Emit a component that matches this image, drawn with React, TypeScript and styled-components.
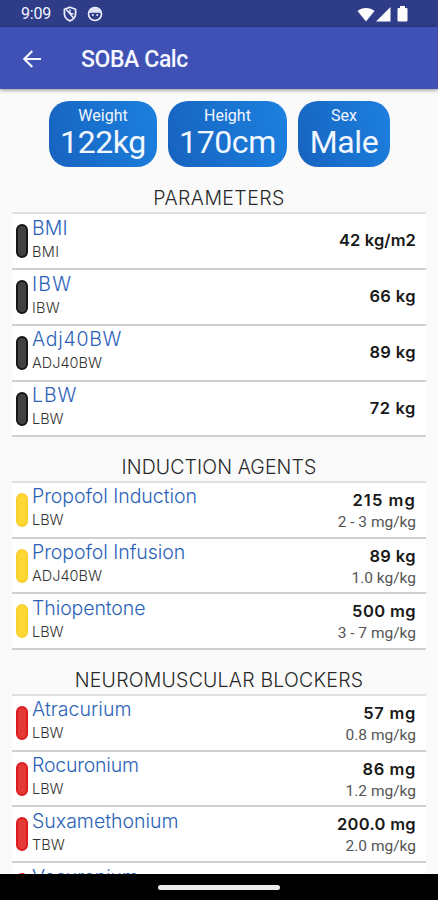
import React from "react";
import styled, { createGlobalStyle } from "styled-components";

const GlobalStyle = createGlobalStyle`
  * { box-sizing: border-box; }
  html, body { margin: 0; padding: 0; overflow: hidden; }
  body { background: #fafafa; font-family: Roboto, sans-serif; }
`;

const Screen = styled.div`
  width: 438px;
  height: 900px;
  display: flex;
  flex-direction: column;
  background: #fafafa;
  overflow: hidden;
`;

const StatusBar = styled.div`
  height: 27px;
  flex: none;
  display: flex;
  align-items: center;
  padding: 1px 30px 0 21px;
  background: #2f3c87;
  color: #f4f5ff;
`;

const Clock = styled.span`
  width: 42px;
  font-size: 16px;
  line-height: 20px;
  letter-spacing: -0.2px;
`;

const StatusIcon = styled.svg<{ $gap: number }>`
  display: block;
  flex: none;
  margin-left: ${(p) => p.$gap}px;
`;

const Spacer = styled.div`
  flex: 1;
`;

const AppBar = styled.header`
  height: 62px;
  flex: none;
  display: flex;
  align-items: center;
  padding: 2px 20px 0;
  background: #3f51b5;
  box-shadow: 0 1px 4px rgba(0, 0, 0, 0.45);
  z-index: 1;
`;

const Title = styled.h1`
  margin: 2px 0 0 37px;
  color: #f5f6ff;
  font-size: 23px;
  font-weight: 500;
  line-height: 28px;
  letter-spacing: -0.4px;
`;

const Content = styled.main`
  flex: 1;
  min-height: 0;
  overflow: hidden;
  padding: 12px 12px 0;
`;

const Chips = styled.div`
  display: flex;
  gap: 11px;
  padding-left: 37px;
  margin-bottom: 16.25px;
`;

const Chip = styled.div<{ $width: number }>`
  width: ${(p) => p.$width}px;
  height: 66px;
  border-radius: 20px;
  padding-top: 6px;
  display: flex;
  flex-direction: column;
  align-items: center;
  background: linear-gradient(75deg, #1763bf, #1c80df);
  color: #f1f7ff;
`;

const ChipLabel = styled.span`
  font-size: 16px;
  line-height: 18px;
`;

const ChipValue = styled.span`
  font-size: 32px;
  line-height: 35px;
  letter-spacing: -0.4px;
`;

const Section = styled.section`
  margin-bottom: 14.7px;
`;

const Heading = styled.h2<{ $spacing: number }>`
  margin: 0;
  height: 29px;
  text-align: center;
  color: #292929;
  font-family: Inter, sans-serif;
  font-size: 19.5px;
  font-weight: 300;
  line-height: 31.5px;
  white-space: nowrap;
  letter-spacing: ${(p) => p.$spacing}px;
`;

const List = styled.div`
  border-top: 2px solid #e0e0e0;
  background: #fff;
`;

const Row = styled.div`
  height: 55.75px;
  display: flex;
  padding: 0 10px 0 4px;
  border-bottom: 2px solid #d0d0d0;
`;

const Pill = styled.div<{ $fill: string; $edge: string }>`
  width: 12px;
  height: 34px;
  margin-top: 10px;
  flex: none;
  border-radius: 6px;
  border: 2px solid ${(p) => p.$edge};
  background: ${(p) => p.$fill};
`;

const Names = styled.div`
  flex: 1;
  display: flex;
  flex-direction: column;
  padding: 0.5px 0 0 4px;
`;

const Name = styled.span<{ $spacing: number }>`
  color: #2b62b8;
  font-family: Inter, sans-serif;
  font-size: 19.5px;
  font-weight: 300;
  line-height: 26px;
  white-space: nowrap;
  letter-spacing: ${(p) => p.$spacing}px;
`;

const Basis = styled.span<{ $spacing: number }>`
  color: #333;
  font-family: Inter, sans-serif;
  font-size: 14.5px;
  font-weight: 300;
  line-height: 21px;
  letter-spacing: ${(p) => p.$spacing}px;
`;

const Amounts = styled.div<{ $single: boolean }>`
  display: flex;
  flex-direction: column;
  align-items: flex-end;
  padding-top: ${(p) => (p.$single ? 14 : 5)}px;
`;

const Dose = styled.span<{ $spacing: number }>`
  color: #191919;
  font-family: Inter, sans-serif;
  font-size: 16.5px;
  font-weight: 600;
  line-height: 24px;
  letter-spacing: ${(p) => p.$spacing}px;
`;

const Rate = styled.span`
  color: #555;
  font-size: 15.5px;
  line-height: 20.5px;
`;

const NavBar = styled.div`
  height: 26px;
  flex: none;
  display: flex;
  justify-content: center;
  align-items: center;
  background: #000;
`;

const NavHandle = styled.div`
  width: 122px;
  height: 5px;
  border-radius: 3px;
  background: #ececec;
`;

type Tone = "black" | "yellow" | "red";
const tones: Record<Tone, [string, string]> = {
  black: ["#414141", "#161616"],
  yellow: ["#fdd835", "#fbd02c"],
  red: ["#e53935", "#dc1c20"],
};

interface Item {
  name: string;
  nameSpacing: number;
  basis: string;
  basisSpacing: number;
  dose: string;
  doseSpacing: number;
  rate?: string;
}

interface Group {
  title: string;
  spacing: number;
  tone: Tone;
  items: Item[];
}

const item = (
  name: string,
  nameSpacing: number,
  basis: string,
  basisSpacing: number,
  dose: string,
  doseSpacing: number,
  rate?: string
): Item => ({ name, nameSpacing, basis, basisSpacing, dose, doseSpacing, rate });

const groups: Group[] = [
  {
    title: "PARAMETERS",
    spacing: 0.4,
    tone: "black",
    items: [
      item("BMI", 0.1, "BMI", 0.4, "42 kg/m2", 0.1),
      item("IBW", 1.2, "IBW", 0.3, "66 kg", 0.4),
      item("Adj40BW", 0.7, "ADJ40BW", 0, "89 kg", 0.4),
      item("LBW", 0.9, "LBW", 0, "72 kg", 0.6),
    ],
  },
  {
    title: "INDUCTION AGENTS",
    spacing: 0.1,
    tone: "yellow",
    items: [
      item("Propofol Induction", -0.05, "LBW", 0, "215 mg", 1.1, "2 - 3 mg/kg"),
      item("Propofol Infusion", -0.05, "ADJ40BW", 0, "89 kg", 0.4, "1.0 kg/kg"),
      item("Thiopentone", -0.1, "LBW", 0, "500 mg", 0.4, "3 - 7 mg/kg"),
    ],
  },
  {
    title: "NEUROMUSCULAR BLOCKERS",
    spacing: 0.22,
    tone: "red",
    items: [
      item("Atracurium", 0.05, "LBW", 0, "57 mg", 0.7, "0.8 mg/kg"),
      item("Rocuronium", -0.2, "LBW", 0, "86 mg", 0.6, "1.2 mg/kg"),
      item("Suxamethonium", 0, "TBW", 0, "200.0 mg", 0.3, "2.0 mg/kg"),
      item("Vecuronium", -0.2, "", 0, "", 0),
    ],
  },
];

export default function App() {
  return (
    <Screen>
      <GlobalStyle />
      <StatusBar>
        <Clock>9:09</Clock>
        <StatusIcon $gap={0} width="14" height="16" viewBox="0 0 14 16" fill="none" stroke="#eef0ff" strokeWidth="1.7">
          <path d="M7 1.2 12.6 3.3V7.4C12.6 11 10.2 13.6 7 14.9 3.8 13.6 1.4 11 1.4 7.4V3.3Z" />
          <path d="M3 3.2 10.8 12.2M7 3.5V7.5L10.5 8" strokeWidth="1.4" />
        </StatusIcon>
        <StatusIcon $gap={10} width="16" height="16" viewBox="0 0 16 16">
          <circle cx="8" cy="8" r="6.5" fill="none" stroke="#eef0ff" strokeWidth="1.6" />
          <path d="M2 7C2.5 3.5 5 2 8 2s5.5 1.500 6 5C10 6.800 6 6.800 2 7Z" fill="#dfe2f8" />
          <circle cx="5.8" cy="9" r="1" fill="#eef0ff" />
          <circle cx="10.2" cy="9" r="1" fill="#eef0ff" />
        </StatusIcon>
        <Spacer />
        <StatusIcon $gap={0} width="18" height="15" viewBox="0 0 18 15" fill="#fff">
          <path d="M0.500 4C5 0 13 0 17.500 4L9 14.500Z" />
        </StatusIcon>
        <StatusIcon $gap={1} width="15" height="15" viewBox="0 0 15 15" fill="#fff">
          <path d="M14.500 0V14.500H0Z" />
        </StatusIcon>
        <StatusIcon $gap={6} width="11" height="16" viewBox="0 0 11 16" fill="#fff">
          <path d="M3 0H8V2H9.500Q10.500 2 10.500 3V14.500Q10.500 15.500 9.500 15.500H1.500Q0.500 15.500 0.500 14.500V3Q0.500 2 1.500 2H3Z" />
        </StatusIcon>
      </StatusBar>
      <AppBar>
        <svg width="24" height="24" viewBox="0 0 24 24" fill="none" stroke="#f5f6ff" strokeWidth="2.2">
          <path d="M21 12H5M12.300 4 4.300 12l8 8" />
        </svg>
        <Title>SOBA Calc</Title>
      </AppBar>
      <Content>
        <Chips>
          <Chip $width={108}>
            <ChipLabel>Weight</ChipLabel>
            <ChipValue>122kg</ChipValue>
          </Chip>
          <Chip $width={119}>
            <ChipLabel>Height</ChipLabel>
            <ChipValue>170cm</ChipValue>
          </Chip>
          <Chip $width={92}>
            <ChipLabel>Sex</ChipLabel>
            <ChipValue>Male</ChipValue>
          </Chip>
        </Chips>
        {groups.map((group) => (
          <Section key={group.title}>
            <Heading $spacing={group.spacing}>{group.title}</Heading>
            <List>
              {group.items.map((it) => (
                <Row key={it.name}>
                  <Pill $fill={tones[group.tone][0]} $edge={tones[group.tone][1]} />
                  <Names>
                    <Name $spacing={it.nameSpacing}>{it.name}</Name>
                    {it.basis && <Basis $spacing={it.basisSpacing}>{it.basis}</Basis>}
                  </Names>
                  {it.dose && (
                    <Amounts $single={!it.rate}>
                      <Dose $spacing={it.doseSpacing}>{it.dose}</Dose>
                      {it.rate && <Rate>{it.rate}</Rate>}
                    </Amounts>
                  )}
                </Row>
              ))}
            </List>
          </Section>
        ))}
      </Content>
      <NavBar>
        <NavHandle />
      </NavBar>
    </Screen>
  );
}
